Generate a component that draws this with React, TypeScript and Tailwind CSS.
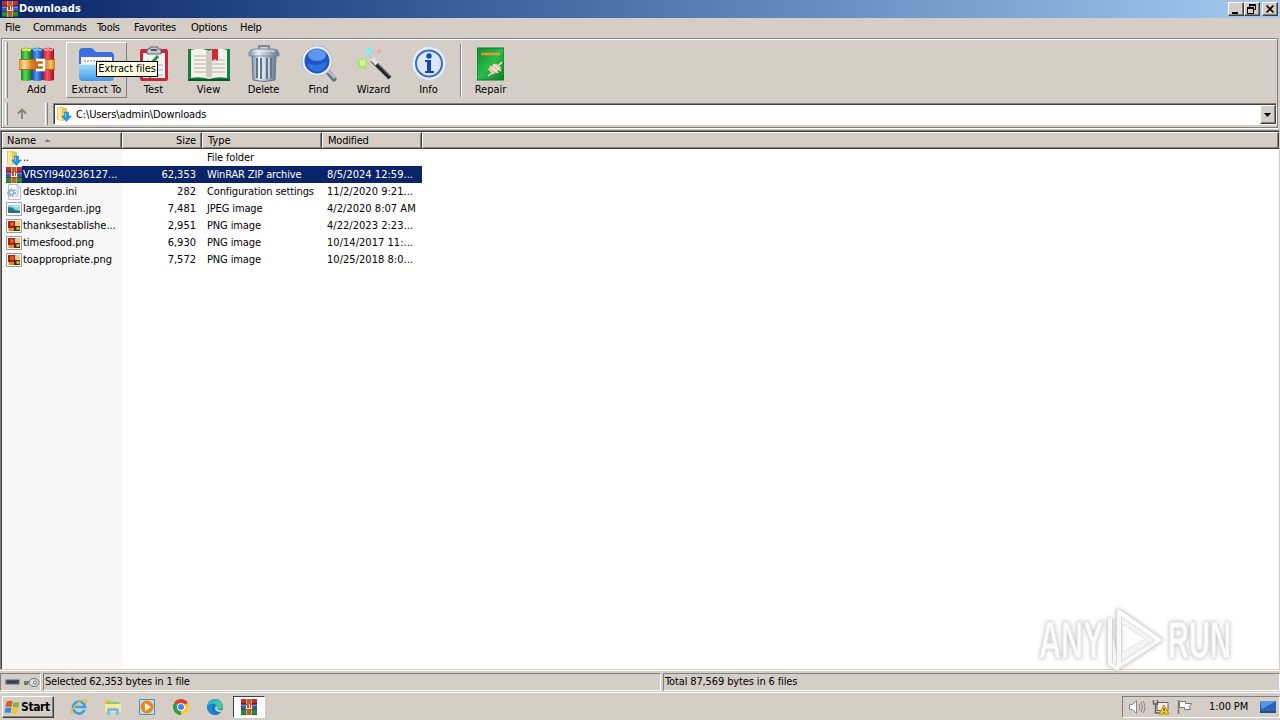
import type { ReactNode } from 'react';

function BooksIcon() {
  return (
    <svg width="36" height="36" viewBox="0 0 36 36">
      <defs>
        <linearGradient id="bookGreen"><stop offset="0" stopColor="#12852c" /><stop offset=".4" stopColor="#5fd957" /><stop offset="1" stopColor="#0b6a20" /></linearGradient>
        <linearGradient id="bookBlue"><stop offset="0" stopColor="#1646b4" /><stop offset=".4" stopColor="#4f9cf5" /><stop offset="1" stopColor="#123794" /></linearGradient>
        <linearGradient id="bookRed"><stop offset="0" stopColor="#c01426" /><stop offset=".4" stopColor="#fb5561" /><stop offset="1" stopColor="#9c0c1c" /></linearGradient>
        <linearGradient id="belt"><stop offset="0" stopColor="#e08a26" /><stop offset=".15" stopColor="#fbe294" /><stop offset=".35" stopColor="#d97b1e" /><stop offset=".65" stopColor="#b85d16" /><stop offset=".88" stopColor="#f6c667" /><stop offset="1" stopColor="#d97b1e" /></linearGradient>
      </defs>
      <path d="M2 3q5-3 11 0v31q-6 2-11 0z" fill="url(#bookGreen)" />
      <path d="M13 3q5-3 11 0v31q-6 2-11 0z" fill="url(#bookBlue)" />
      <path d="M24 3q5-3 11 0v31q-6 2-11 0z" fill="url(#bookRed)" />
      <path d="M3 4q4-1 9 0" stroke="#f1e04a" strokeWidth="2.500" fill="none" />
      <path d="M14 4q4-1 9 0" stroke="#6fc3fa" strokeWidth="2" fill="none" />
      <path d="M25 4q4-1 9 0" stroke="#f5a0a4" strokeWidth="2" fill="none" />
      <path d="M0 13h36v11H0z" fill="url(#belt)" />
      <path d="M0 13.500h36M0 23.500h36" stroke="#b0641a" />
      <path d="M17 14h8v10h-8M19 19h5" stroke="#fff" strokeWidth="2.500" fill="none" />
    </svg>
  );
}

function RarSmall() {
  return (
    <svg width="16" height="16" viewBox="0 0 16 16" shapeRendering="crispEdges">
      <path d="M0 0h16v5H0z" fill="#c42a38" />
      <path d="M0 4.500h16" stroke="#7c1830" />
      <path d="M0 5h16v5H0z" fill="#3559b8" />
      <path d="M0 6h16v1H0z" fill="#6b8fe0" />
      <path d="M0 10h16v6H0z" fill="#2c8a3a" />
      <path d="M0 10.500h16M0 15.500h16" stroke="#1a5f2a" />
      <path d="M5 0h6v16H5z" fill="#b0652f" />
      <path d="M5 0h1v16H5zM10 0h1v16h-1z" fill="#d8a050" />
      <path d="M4 5h8v6H4z" fill="#c4452c" />
      <path d="M5.500 6v3.500h5V6M8 5v4" stroke="#fff" fill="none" />
    </svg>
  );
}

function FolderIcon() {
  return (
    <svg width="37" height="36" viewBox="0 0 37 36">
      <defs><linearGradient id="folderFront" x2="0" y2="1"><stop stopColor="#a8dcfa" /><stop offset="1" stopColor="#3d9ae6" /></linearGradient></defs>
      <path d="M1 6q0-4 4-4h8q2 0 4 3l1 1h14q4 0 4 4v19H1z" fill="#3b6fe0" />
      <path d="M3 11h31v10H3z" fill="#fafcff" />
      <path d="M6 15h26" stroke="#b3b9c8" strokeWidth="2" strokeDasharray="2 1" />
      <path d="M1 18h35v13q0 4-4 4H5q-4 0-4-4z" fill="url(#folderFront)" />
      <path d="M2 18.500h33" stroke="#d4f0ff" />
    </svg>
  );
}

function TestIcon() {
  return (
    <svg width="30" height="36" viewBox="0 0 30 36">
      <rect x="1" y="3" width="28" height="32" rx="2" fill="#cf2338" />
      <path d="M4 7h22v25H4z" fill="#f4f5f7" />
      <path d="M8 3h3V1h8v2h3v5H8z" fill="#c4c8cf" stroke="#5e626b" />
      <path d="M12 4h6" stroke="#51545c" strokeWidth="2" />
      <path d="M8 15l3 4 8-9" stroke="#27943b" strokeWidth="3" fill="none" />
      <path d="M8 29l3 2 5-5" stroke="#27943b" strokeWidth="2" fill="none" />
      <path d="M7 24h5M15 24h9M17 29h7M17 19h7" stroke="#a3a8b2" />
    </svg>
  );
}

function ViewIcon() {
  return (
    <svg width="42" height="36" viewBox="0 0 42 36">
      <path d="M0 3h42v32H0z" fill="#16823c" />
      <path d="M0 34h42" stroke="#0b5725" strokeWidth="2" />
      <path d="M3 4q9-3 18 1q9-4 18-1v28q-9-2-18 1q-9-3-18-1z" fill="#f5f2ea" />
      <path d="M18 4q3 0 3 3v25q-1-1-3-1zM24 4q-3 0-3 3v25q1-1 3-1z" fill="#cdc8bf" />
      <path d="M6 10h12M6 14h12M6 18h12M6 22h12M6 26h12M24 14h13M24 18h13M24 22h13M24 26h13" stroke="#b3b1ac" />
      <path d="M24 3h6v12l-3-2-3 2z" fill="#d32636" />
    </svg>
  );
}

function TrashIcon() {
  return (
    <svg width="32" height="37" viewBox="0 0 32 37">
      <defs><linearGradient id="bin"><stop stopColor="#7c8da4" /><stop offset=".3" stopColor="#e9f0f7" /><stop offset=".65" stopColor="#a6b5c8" /><stop offset="1" stopColor="#66778e" /></linearGradient></defs>
      <path d="M11 4V1h10v3" fill="none" stroke="#77879c" strokeWidth="2" />
      <path d="M4 10h24l-1 25q-11 3-22 0z" fill="url(#bin)" stroke="#65758b" />
      <path d="M9 13v20M13 13v21M19 13v21M23 13v20" stroke="#64758c" strokeWidth="2" />
      <path d="M11 13v20M16 13v21M21 13v20" stroke="#eef4fb" />
      <path d="M1 8q1-4 5-4h20q4 0 5 4v3H1z" fill="url(#bin)" stroke="#8191a8" />
      <path d="M5 6h22" stroke="#e2ebf4" />
    </svg>
  );
}

function FindIcon() {
  return (
    <svg width="36" height="36" viewBox="0 0 36 36">
      <path d="M26 25l7 8" stroke="#6b737e" strokeWidth="5" strokeLinecap="round" />
      <path d="M26 24l8 8" stroke="#c3cbd4" strokeWidth="2" />
      <circle cx="16" cy="15" r="14" fill="#2054c4" stroke="#e6eefa" strokeWidth="3" />
      <circle cx="16" cy="15" r="15.300" fill="none" stroke="#a7b4ca" />
      <ellipse cx="16" cy="9" rx="9" ry="6" fill="#5c96ee" />
      <path d="M6 17q10 5 20-2q-1 10-10 11q-8-1-10-9z" fill="#3172df" />
    </svg>
  );
}

function WizardIcon() {
  return (
    <svg width="36" height="36" viewBox="0 0 36 36">
      <path d="M16 14l18 18" stroke="#25272c" strokeWidth="4" />
      <path d="M16 13l5 5" stroke="#e2e4e7" strokeWidth="4" />
      <path d="M22 18l12 12" stroke="#777b82" />
      <path d="M13 0l1.500 4 4 1-4 2-1 4-2-4-4-1 4-2z" fill="#68dcf1" />
      <path d="M6 11l2 4 5 1-4 3 1 5-4-3-5 2 2-4-3-4 5 0z" fill="#99e954" />
      <path d="M23 2l1 2 2 1-2 1-1 2-1-2-2-1 2-1z" fill="#f7a5a0" />
      <circle cx="13" cy="6" r="3" fill="#8eeaf8" />
      <circle cx="6.500" cy="17" r="3" fill="#c8ff90" />
    </svg>
  );
}

function InfoIcon() {
  return (
    <svg width="36" height="36" viewBox="0 0 36 36">
      <circle cx="18" cy="17.500" r="17" fill="#e9effb" stroke="#c4cde0" />
      <circle cx="18" cy="17.500" r="13" fill="#dce7fa" stroke="#3c6bc9" strokeWidth="2" />
      <circle cx="18" cy="10" r="2.700" fill="#1746b8" />
      <path d="M14 14h6v11h3v2h-9v-2h2v-9h-2z" fill="#1746b8" />
    </svg>
  );
}

function RepairIcon() {
  return (
    <svg width="27" height="34" viewBox="0 0 27 34">
      <defs><linearGradient id="repair" x2="1" y2="1"><stop stopColor="#138e2f" /><stop offset=".5" stopColor="#28bd49" /><stop offset="1" stopColor="#0c7f29" /></linearGradient></defs>
      <path d="M0 1h27v32H0z" fill="url(#repair)" stroke="#11772a" />
      <path d="M4 7h19" stroke="#e99a2c" strokeWidth="2.500" />
      <path d="M10 22l9-6 6 5-9 7z" fill="#d8cfa5" stroke="#8e8954" />
      <path d="M13 19l8 7M16 17l8 7M21 19l4-4M11 29l4-3" stroke="#f1ead0" strokeWidth="1.500" />
    </svg>
  );
}

function DownloadFolder() {
  return (
    <svg width="16" height="16" viewBox="0 0 16 16">
      <path d="M1 1h5l5 1v12l-5 1-5-1z" fill="#e9c65c" />
      <path d="M2 1l4 2v12l-4-1z" fill="#fbe9a0" />
      <path d="M8.500 6h4v4h3L10.500 15.500 5.500 10h3z" fill="#239be3" stroke="#1478b8" strokeWidth=".5" />
      <path d="M9.500 7v4" stroke="#87d4fa" />
    </svg>
  );
}

function IniIcon() {
  return (
    <svg width="16" height="16" viewBox="0 0 16 16">
      <path d="M2.500.5h9l3 3v12h-12z" fill="#fff" stroke="#b3bfca" />
      <path d="M11 1v3h3M9 6h4M10 8h3M10 10h3M9 12h4" fill="none" stroke="#a6c1d6" />
      <circle cx="5.500" cy="8.500" r="3.500" fill="none" stroke="#8bb0c8" strokeWidth="2" strokeDasharray="2 1" />
      <circle cx="5.500" cy="8.500" r="2" fill="#fff" stroke="#5b88a8" />
    </svg>
  );
}

function JpgIcon() {
  return (
    <svg width="16" height="16" viewBox="0 0 16 16">
      <path d="M.5 1.500h15v13H.5z" fill="#fff" stroke="#9aa4aa" />
      <path d="M2 4h12v8H2z" fill="#8fd4ee" />
      <path d="M2 6q5 0 7 3l5 1v2H2z" fill="#257d78" />
      <path d="M2 10.500h12V12H2z" fill="#2c67a0" />
      <path d="M8 5.500h5" stroke="#e6f7ff" />
    </svg>
  );
}

function PngIcon() {
  return (
    <svg width="16" height="16" viewBox="0 0 16 16">
      <path d="M.5 1.500h15v13H.5z" fill="#fff" stroke="#97999c" />
      <path d="M2 3h12v10H2z" fill="#f0c488" />
      <path d="M2 3h7v7H2z" fill="#a62315" />
      <circle cx="6" cy="6" r="2" fill="#df6420" />
      <path d="M8 8h6v5H8z" fill="#3f2a16" />
      <circle cx="12" cy="10.500" r="1.800" fill="#e4ac20" />
      <path d="M3 10h5v3H3z" fill="#e98a22" />
    </svg>
  );
}

const tools: { label: string; icon: ReactNode; width: string }[] = [
  { label: 'Add', icon: <BooksIcon />, width: 'w-[58px] border border-transparent pr-px' },
  { label: 'Extract To', icon: <FolderIcon />, width: 'w-[61px] border border-t-white border-l-white border-r-[#808080] border-b-[#808080] tracking-[0.1px]' },
  { label: 'Test', icon: <TestIcon />, width: 'w-[53px] border border-transparent' },
  { label: 'View', icon: <ViewIcon />, width: 'w-[57px] border border-transparent' },
  { label: 'Delete', icon: <TrashIcon />, width: 'w-[53px] border border-transparent tracking-[-0.2px]' },
  { label: 'Find', icon: <FindIcon />, width: 'w-[57px] border border-transparent' },
  { label: 'Wizard', icon: <WizardIcon />, width: 'w-[53px] border border-transparent' },
  { label: 'Info', icon: <InfoIcon />, width: 'w-[57px] border border-transparent' },
];

const menus = [
  { label: 'File', width: 'w-[28px]' },
  { label: 'Commands', width: 'w-[64px]' },
  { label: 'Tools', width: 'w-[37px]' },
  { label: 'Favorites', width: 'w-[57px]' },
  { label: 'Options', width: 'w-[49px]' },
  { label: 'Help', width: 'w-[30px]' },
];

const files: { name: string; size: string; type: string; date: string; icon: ReactNode; selected?: boolean }[] = [
  { name: '..', size: '', type: 'File folder', date: '', icon: <DownloadFolder /> },
  { name: 'VRSYI940236127...', size: '62,353', type: 'WinRAR ZIP archive', date: '8/5/2024 12:59...', icon: <RarSmall />, selected: true },
  { name: 'desktop.ini', size: '282', type: 'Configuration settings', date: '11/2/2020 9:21...', icon: <IniIcon /> },
  { name: 'largegarden.jpg', size: '7,481', type: 'JPEG image', date: '4/2/2020 8:07 AM', icon: <JpgIcon /> },
  { name: 'thanksestablishe...', size: '2,951', type: 'PNG image', date: '4/22/2023 2:23...', icon: <PngIcon /> },
  { name: 'timesfood.png', size: '6,930', type: 'PNG image', date: '10/14/2017 11:...', icon: <PngIcon /> },
  { name: 'toappropriate.png', size: '7,572', type: 'PNG image', date: '10/25/2018 8:0...', icon: <PngIcon /> },
];

const raised = 'border border-t-white border-l-white border-r-[#404040] border-b-[#404040] shadow-[inset_-1px_-1px_0_#808080] bg-[#d5cec7]';

function Grip({ className = '' }: { className?: string }) {
  return <div className={`w-[3px] shrink-0 border-l border-l-white border-r border-r-[#808080] ${className}`} />;
}

function TitleBar() {
  return (
    <div className="flex h-[18px] items-center bg-linear-to-r from-[#0a246a] to-[#a6caf0] px-[2px]">
      <RarSmall />
      <span className="ml-px text-[11px] font-bold tracking-[0.1px] text-white">Downloads</span>
      <div className="ml-auto flex">
        <button className={`h-[14px] w-4 ${raised}`}>
          <svg width="14" height="12" className="block"><path d="M3 9h6v2H3z" /></svg>
        </button>
        <button className={`h-[14px] w-4 ${raised}`}>
          <svg width="14" height="12" className="block" shapeRendering="crispEdges">
            <path d="M4 1h7v6H9V6h1V3H5v1H4zM2 4h7v7H2zM3 6v4h5V6z" fillRule="evenodd" />
          </svg>
        </button>
        <button className={`ml-[2px] h-[14px] w-4 ${raised}`}>
          <svg width="14" height="12" className="block"><path d="M3.500 2.500l7 7M10.500 2.500l-7 7" stroke="#000" strokeWidth="1.700" /></svg>
        </button>
      </div>
    </div>
  );
}

function Toolbar() {
  return (
    <div className="relative flex h-[60px] pt-[3px] pl-[3px]">
      <Grip className="mb-px" />
      {tools.map((t) => (
        <div key={t.label} className={`flex h-[56px] shrink-0 flex-col items-center ${t.width}`}>
          <div className="flex h-[40px] items-center pt-px">{t.icon}</div>
          <span className="text-[11px] leading-[13px] whitespace-nowrap">{t.label}</span>
        </div>
      ))}
      <div className="mt-[2px] ml-[3px] h-[53px] w-[2px] border-l border-l-[#808080] bg-white" />
      <div className="flex h-[56px] w-[57px] flex-col items-center border border-transparent">
        <div className="flex h-[40px] items-center pt-px"><RepairIcon /></div>
        <span className="text-[11px] leading-[13px]">Repair</span>
      </div>
      <div className="absolute top-[22px] left-[94px] flex h-4 w-[62px] items-center justify-center border border-black bg-[#ffffe1] pt-px text-[11px] tracking-[-0.1px] whitespace-nowrap">
        Extract files
      </div>
    </div>
  );
}

function AddressBar() {
  return (
    <div className="flex h-[27px] pt-[4px] pl-[3px]">
      <Grip className="mb-px" />
      <svg width="14" height="22" viewBox="0 0 14 22" className="ml-[7px]">
        <path d="M7 16V7M3 10.500l4-4 4 4" stroke="#85817b" strokeWidth="1.800" fill="none" />
      </svg>
      <Grip className="mb-px ml-[16px]" />
      <div className="ml-[5px] flex h-[22px] flex-1 items-center border border-t-[#808080] border-l-[#808080] border-r-white border-b-white bg-white pl-[2px] shadow-[inset_1px_1px_0_#404040]">
        <DownloadFolder />
        <span className="ml-[4px] pt-[2px] text-[11px] tracking-[-0.13px]">C:\Users\admin\Downloads</span>
        <button className={`mt-px ml-auto flex h-[19px] w-4 items-center justify-center ${raised}`}>
          <svg width="8" height="4"><path d="M0 0h7L3.500 4z" /></svg>
        </button>
      </div>
    </div>
  );
}

function HeaderCell({ children, className }: { children?: ReactNode; className: string }) {
  return (
    <div className={`flex h-[17px] items-center border-t border-r border-b border-t-white border-r-[#404040] border-b-[#404040] bg-[#d5cec7] pt-[2px] text-[11px] shadow-[inset_1px_0_0_#fff,inset_-1px_-1px_0_#808080] ${className}`}>
      {children}
    </div>
  );
}

function Watermark() {
  return (
    <svg width="212" height="66" viewBox="0 0 212 66" className="absolute right-[32px] bottom-[-3px] drop-shadow-[0_0_2px_#bbbbbb]">
      <g fill="#fcfcfc" stroke="#e6e6e6" strokeWidth="1" fontFamily="'Liberation Sans', sans-serif" fontWeight="bold" fontSize="51">
        <text transform="translate(4 52) scale(.6 1)">ANY</text>
        <text transform="translate(133 52) scale(.57 1)">RUN</text>
      </g>
      <path d="M75 12v46l9 5M84 6v54l40-26z" fill="#f4f4f4" stroke="#d9d9d9" strokeWidth="6" strokeLinejoin="round" />
      <path d="M75 12v46l9 5M84 6v54l40-26z" fill="none" stroke="#f8f8f8" strokeWidth="4" />
      <path d="M84 6l40 28" stroke="#fff" strokeWidth="4" />
      <path d="M88 18v28l22-13z" fill="#fff" stroke="#e4e4e4" />
    </svg>
  );
}

function FileList() {
  return (
    <div className="relative flex h-[540px] flex-col border border-t-[#808080] border-r-[#d5cec7] border-b-[#d5cec7] border-l-[#808080] bg-white">
      <div className="flex min-h-0 flex-1 flex-col border-t border-l border-[#404040]">
        <div className="flex">
          <HeaderCell className="w-[120px] pl-[5px]">
            Name
            <svg width="7" height="3" viewBox="0 0 8 4" preserveAspectRatio="none" className="mb-[3px] ml-[8px]"><path d="M4 0l4 4H0z" fill="#808080" /></svg>
          </HeaderCell>
          <HeaderCell className="w-[80px] justify-end pr-[5px] tracking-[-0.1px]">Size</HeaderCell>
          <HeaderCell className="w-[120px] pl-[6px]">Type</HeaderCell>
          <HeaderCell className="w-[100px] pl-[6px] tracking-[-0.2px]">Modified</HeaderCell>
          <HeaderCell className="flex-1" />
        </div>
        <div className="flex-1 bg-linear-to-r from-[#f7f7f7] from-[120px] to-white to-[120px]">
          {files.map((f) => (
            <div key={f.name} className="flex h-[17px] items-center text-[11px] whitespace-nowrap">
              <div className="w-[20px] shrink-0 pl-[4px]">{f.icon}</div>
              <div className={`flex h-[17px] w-[400px] items-center pt-[2px] ${f.selected ? 'bg-[#0a246a] text-white' : ''}`}>
                <span className="w-[100px] pl-px tracking-[-0.03px]">{f.name}</span>
                <span className="w-[74px] text-right">{f.size}</span>
                <span className="w-[120px] pl-[11px] tracking-[-0.13px]">{f.type}</span>
                <span className="w-[106px] pl-[11px] tracking-[0.03px]">{f.date}</span>
              </div>
            </div>
          ))}
        </div>
      </div>
      <Watermark />
    </div>
  );
}

function StatusBar() {
  const cell = 'flex h-[18px] items-center border border-t-[#808080] border-l-[#808080] border-r-white border-b-white';
  return (
    <div className="flex h-[22px] gap-[2px] border-b border-white pt-[2px] text-[11px]">
      <div className={`w-[41px] gap-[3px] pl-[4px] ${cell}`}>
        <svg width="15" height="8"><rect x=".5" y="1.500" width="14" height="5" rx="1" fill="#4c5662" stroke="#8f9baa" /><path d="M3 4h9" stroke="#1e2731" /></svg>
        <svg width="17" height="11" viewBox="0 0 17 11">
          <path d="M1 5h8M2 5v3M4 5v3" stroke="#777" strokeWidth="2" />
          <ellipse cx="11" cy="5.500" rx="5" ry="4" fill="#ddd" stroke="#777" />
          <circle cx="12" cy="5.500" r="1.500" fill="#fff" stroke="#666" />
        </svg>
      </div>
      <div className={`w-[618px] pt-px pl-px tracking-[-0.2px] ${cell}`}>Selected 62,353 bytes in 1 file</div>
      <div className={`flex-1 pt-px pl-px tracking-[-0.13px] ${cell}`}>Total 87,569 bytes in 6 files</div>
    </div>
  );
}

function LaunchIcon({ kind }: { kind: 'ie' | 'explorer' | 'media' | 'chrome' | 'edge' }) {
  if (kind === 'ie')
    return (
      <svg width="18" height="18" viewBox="0 0 18 18">
        <path d="M14.500 12A6 6 0 1 1 15 9H5" fill="none" stroke="#35a5e3" strokeWidth="2.700" />
        <path d="M3 16Q-1 15 5 8T15 2q3 1 0 4" fill="none" stroke="#eab832" strokeWidth="1.400" />
      </svg>
    );
  if (kind === 'explorer')
    return (
      <svg width="18" height="18" viewBox="0 0 18 18">
        <path d="M1 2h6l1 2h8v9H1z" fill="#e7bf52" />
        <path d="M3 4h12v5H3z" fill="#8acb70" />
        <path d="M1 6h16v8H1z" fill="#fae69c" />
        <path d="M3 17v-5q0-2 2-2h8q2 0 2 2v5h-3v-4H6v4z" fill="#77bfe9" />
      </svg>
    );
  if (kind === 'media')
    return (
      <svg width="18" height="18" viewBox="0 0 18 18">
        <path d="M1.500 1.500h15v15h-15z" fill="#bfe0f4" stroke="#5193bd" />
        <circle cx="9" cy="9" r="6.500" fill="#ee8518" />
        <path d="M7 5l6 4-6 4z" fill="#fff" />
      </svg>
    );
  if (kind === 'chrome')
    return (
      <svg width="18" height="18" viewBox="0 0 18 18">
        <path d="M9 9L2.070 5A8 8 0 0 1 15.930 5z" fill="#df3c30" />
        <path d="M9 9L15.930 5A8 8 0 0 1 9 17z" fill="#fcc934" />
        <path d="M9 9v8A8 8 0 0 1 2.070 5z" fill="#2d9e4c" />
        <circle cx="9" cy="9" r="4" fill="#fff" />
        <circle cx="9" cy="9" r="3" fill="#4285f4" />
      </svg>
    );
  return (
    <svg width="18" height="18" viewBox="0 0 18 18">
      <circle cx="9" cy="9" r="8" fill="#1678c8" />
      <path d="M1 8Q3 1 9 1q8 1 8 8-1 3-5 3-2 0-1-2Q11 5 5 6 2 7 1 9z" fill="#43ca97" />
      <path d="M1 9q1-7 8-8 4 0 6 3-5-2-8 1-4 0-6 4z" fill="#2fb4e0" />
      <path d="M1 9q2-4 6-3-2 2-1 6 2 4 7 4-5 2-9-1Q1 12 1 9z" fill="#168bd6" />
      <path d="M10 8q2 1 1 3 1 2 6 1v2q-6 1-8-3 0-2 1-3z" fill="#d5cec7" />
    </svg>
  );
}

function Taskbar() {
  return (
    <div className="flex h-[27px] items-center pt-px pl-[2px]">
      <button className={`flex h-[22px] w-[52px] items-center pl-[1px] ${raised}`}>
        <svg width="17" height="16" viewBox="0 0 16 16">
          <path d="M2 3q3-2 6-1L7 8Q4 7 1 8z" fill="#e85224" />
          <path d="M9 3q3 1 6 0l-1 5q-3 1-6 0z" fill="#7cbb34" />
          <path d="M1 9q3-1 6 0l-1 5q-3-1-6 0z" fill="#3589dc" />
          <path d="M8 9q3 1 6 0l-1 5q-3 2-6 0z" fill="#f6c62f" />
        </svg>
        <span className="text-[12px] font-bold tracking-[-0.4px]">Start</span>
      </button>
      <div className="ml-[16px] flex w-[154px] justify-between">
        <LaunchIcon kind="ie" />
        <LaunchIcon kind="explorer" />
        <LaunchIcon kind="media" />
        <LaunchIcon kind="chrome" />
        <LaunchIcon kind="edge" />
      </div>
      <div className="ml-[9px] flex h-[22px] w-8 items-center justify-center border border-t-[#404040] border-l-[#404040] border-r-white border-b-white bg-white">
        <RarSmall />
      </div>
      <div className="ml-auto flex h-[22px] w-[158px] items-center border border-t-[#808080] border-l-[#808080] border-r-white border-b-white pl-[5px] text-[11px]">
        <svg width="18" height="16" viewBox="0 0 18 16" fill="none" stroke="#8a8680">
          <path d="M1.500 5.500h3l4-4v13l-4-4h-3z" fill="#fff" />
          <path d="M11 5q2 3 0 6M13 3q3 5 0 10M15 2q4 6 0 12" />
        </svg>
        <svg width="18" height="16" viewBox="0 0 18 16" className="ml-[6px]">
          <path d="M5 3.500h11v8H5z" fill="#eee" stroke="#666" />
          <path d="M1.500 1v4h4V1M3.500 5v9h5" fill="none" stroke="#666" strokeWidth="1.500" />
          <path d="M12 6l5 9H7z" fill="#f9cf22" stroke="#b98c0b" />
          <path d="M12 9v3M12 13v1" stroke="#222" />
        </svg>
        <svg width="18" height="16" viewBox="0 0 18 16" className="ml-[6px]">
          <path d="M2.500 1v14" stroke="#77736e" strokeWidth="1.500" />
          <path d="M3.500 2.500h6v2h6l-2 3 1 3h-6v-2h-5z" fill="#fff" stroke="#77736e" />
        </svg>
        <span className="ml-[15px] pt-px tracking-[-0.1px] whitespace-nowrap">1:00 PM</span>
        <svg width="16" height="16" viewBox="0 0 16 16" className="mr-[3px] ml-auto">
          <path d="M0 2h16v10H0z" fill="#2865bd" />
          <path d="M0 2h16L2 10z" fill="#5798e6" />
          <path d="M0 12h16v2H0z" fill="#244b86" />
        </svg>
      </div>
    </div>
  );
}

export default function App() {
  return (
    <div className="flex h-[720px] w-[1280px] flex-col overflow-hidden bg-[#d5cec7] font-['DejaVu_Sans_Condensed','DejaVu_Sans',sans-serif] text-black">
      <TitleBar />
      <div className="flex h-[20px] items-center pt-px pl-[5px] text-[11px] tracking-[-0.3px]">
        {menus.map((m) => (
          <span key={m.label} className={m.width}>{m.label}</span>
        ))}
      </div>
      <div className="mr-[2px] ml-px h-[90px] border border-[#808080] shadow-[inset_1px_1px_0_#fff,0_1px_0_#fff]">
        <Toolbar />
        <AddressBar />
      </div>
      <div className="h-[2px]" />
      <FileList />
      <div className="h-px bg-white" />
      <StatusBar />
      <Taskbar />
    </div>
  );
}
